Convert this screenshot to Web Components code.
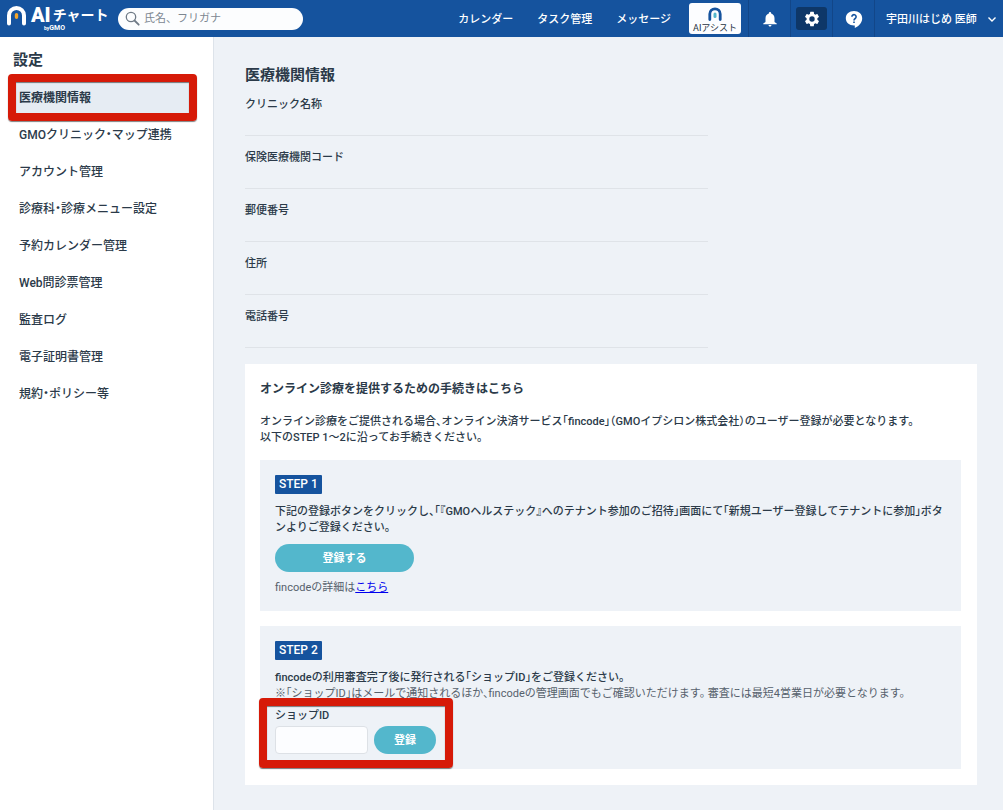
<!DOCTYPE html>
<html lang="ja">
<head>
<meta charset="UTF-8">
<meta name="viewport" content="width=device-width, initial-scale=1.0">
<title>設定 | AIチャート</title>
<style>
  body {
    margin: 0;
    font-family: Roboto, "Noto Sans CJK JP", sans-serif;
    font-size: 11px;
    line-height: 16px;
    font-weight: 500;
    font-feature-settings: "halt";
    color: #2b3a49;
    background: #eef2f7;
    --navy: #15539e;
    --teal: #53b7cc;
    --panel: #eef2f7;
    --mark: #d61a08;
  }
</style>
</head>
<body>
<chart-app>
  <app-header slot="header" user="宇田川はじめ 医師"></app-header>
  <side-menu slot="side" heading="設定">
    <callout-frame><menu-item active>医療機関情報</menu-item></callout-frame>
    <menu-item>GMOクリニック・マップ連携</menu-item>
    <menu-item>アカウント管理</menu-item>
    <menu-item>診療科・診療メニュー設定</menu-item>
    <menu-item>予約カレンダー管理</menu-item>
    <menu-item>Web問診票管理</menu-item>
    <menu-item>監査ログ</menu-item>
    <menu-item>電子証明書管理</menu-item>
    <menu-item>規約・ポリシー等</menu-item>
  </side-menu>
  <clinic-info></clinic-info>
</chart-app>

<script>
class BaseElement extends HTMLElement {
  constructor() {
    super();
    this.attachShadow({ mode: 'open' });
  }

  connectedCallback() {
    this.shadowRoot.innerHTML = this.render();
  }
}

class ChartApp extends BaseElement {
  render() {
    return `
      <style>
        :host { display: flex; flex-direction: column; min-height: 100vh; }
        .body { display: flex; flex: 1; }
        main { flex: 1; min-width: 0; padding: 30px 26px 24px 31px; }
      </style>
      <slot name="header"></slot>
      <div class="body">
        <slot name="side"></slot>
        <main><slot></slot></main>
      </div>
    `;
  }
}

class BrandLogo extends BaseElement {
  render() {
    return `
      <style>
        :host { display: flex; align-items: flex-start; gap: 4px; color: #fff; }
        .mark { display: block; width: 20px; height: 20px; }
        .name { display: flex; flex-direction: column; }
        .title { display: flex; align-items: center; gap: 2px; height: 18px; font-size: 14px; font-weight: 700; white-space: nowrap; }
        .title b { font-size: 20px; }
        .by { padding-left: 13px; font-size: 7px; line-height: 8px; font-weight: 700; }
        .by small { font-size: 5px; }
      </style>
      <svg class="mark" viewBox="0 0 20 20" aria-hidden="true">
        <path d="M2 17.500V9.500a7.500 7.500 0 0 1 15 0V17.500" fill="none" stroke="#fff" stroke-width="4" stroke-linecap="round"/>
        <path d="M9.500 7a1.700 1.700 0 0 1 1.700 1.700v2.600a1.700 1.700 0 0 1-3.400 0V8.700A1.700 1.700 0 0 1 9.500 7z" fill="#f4a52a"/>
      </svg>
      <div class="name">
        <span class="title"><b>AI</b>チャート</span>
        <span class="by"><small>by</small>GMO</span>
      </div>
    `;
  }
}

class SearchBox extends BaseElement {
  render() {
    return `
      <style>
        :host { display: block; }
        label {
          display: flex;
          align-items: center;
          gap: 4px;
          box-sizing: border-box;
          width: 185px;
          height: 22px;
          padding: 0 8px 0 7px;
          border-radius: 11px;
          background: #fcfdfe;
        }
        svg { flex: none; width: 15px; height: 15px; }
        input {
          flex: 1;
          min-width: 0;
          padding: 1px 0 0;
          border: 0;
          outline: 0;
          background: none;
          font: inherit;
          font-feature-settings: normal;
          color: #2b3a49;
        }
        input::placeholder { color: #7d8791; opacity: 1; }
      </style>
      <label>
        <svg viewBox="0 0 15 15" fill="none" stroke="#6f7a86" aria-hidden="true">
          <circle cx="6" cy="6" r="4.700" stroke-width="1.300"/>
          <path d="M9.500 9.500l4.200 4.200" stroke-width="1.800" stroke-linecap="round"/>
        </svg>
        <input type="search" placeholder="氏名、フリガナ" aria-label="患者検索">
      </label>
    `;
  }
}

class AppHeader extends BaseElement {
  render() {
    return `
      <style>
        :host {
          display: flex;
          align-items: center;
          height: 37px;
          background: var(--navy);
          color: #fff;
        }
        brand-logo { width: 104px; margin: 6px 0 0 7px; align-self: flex-start; }
        search-box { margin-left: 7px; font-weight: 400; }
        nav { display: flex; gap: 24px; margin-left: auto; margin-right: 18px; padding-top: 2px; white-space: nowrap; }
        nav a { color: inherit; text-decoration: none; }
        button { padding: 0; border: 0; background: none; color: inherit; font: inherit; cursor: pointer; }
        .assist {
          display: flex;
          flex-direction: column;
          align-items: center;
          width: 52px;
          height: 31px;
          margin-right: 7px;
          padding-top: 4px;
          box-sizing: border-box;
          border-radius: 3px;
          background: #fcfdff;
          color: #26333f;
          font-size: 9px;
          line-height: 15px;
          font-weight: 400;
          white-space: nowrap;
        }
        .assist svg { flex: none; width: 14px; height: 14px; }
        .tool {
          display: flex;
          align-items: center;
          justify-content: center;
          box-sizing: border-box;
          width: 42px;
          height: 37px;
          border-left: 1px solid #124688;
        }
        .tool span { display: flex; align-items: center; justify-content: center; width: 31px; height: 23px; border-radius: 3px; }
        .tool.on span { background: #0e3768; }
        .tool svg { width: 18px; height: 18px; }
        .user {
          display: flex;
          align-items: center;
          justify-content: space-between;
          box-sizing: border-box;
          width: 129px;
          height: 37px;
          padding: 2px 6px 0 11px;
          border-left: 1px solid #124688;
          white-space: nowrap;
        }
        .user svg { width: 10px; height: 10px; }
      </style>
      <brand-logo></brand-logo>
      <search-box></search-box>
      <nav>
        <a href="#calendar">カレンダー</a>
        <a href="#tasks">タスク管理</a>
        <a href="#messages">メッセージ</a>
      </nav>
      <button class="assist">
        <svg viewBox="0 0 14 14" aria-hidden="true">
          <path d="M1.800 12.500V7a5.200 5.200 0 0 1 10.400 0v5.500" fill="none" stroke="#15539e" stroke-width="2.800" stroke-linecap="round"/>
          <path d="M7 5.500a1.500 1.500 0 0 1 1.500 1.500v2.500a1.500 1.500 0 0 1-3 0V7A1.500 1.500 0 0 1 7 5.500z" fill="#53b7cc"/>
        </svg>
        AIアシスト
      </button>
      <button class="tool" aria-label="お知らせ"><span>
        <svg viewBox="0 0 24 24" fill="#fff"><path d="M12 22c1.100 0 2-.9 2-2h-4c0 1.100.9 2 2 2zm6-6v-5c0-3.070-1.640-5.640-4.500-6.320V4a1.500 1.500 0 0 0-3 0v.68C7.630 5.360 6 7.920 6 11v5l-3 2v1h18v-1l-3-2z"/></svg>
      </span></button>
      <button class="tool on" aria-label="設定"><span>
        <svg viewBox="0 0 24 24" fill="#fff"><path d="M19.140 12.940c.04-.3.060-.61.060-.94s-.02-.64-.07-.94l2.030-1.580a.49.49 0 0 0 .12-.61l-1.920-3.320a.49.49 0 0 0-.59-.22l-2.390.96a7 7 0 0 0-1.620-.94l-.36-2.540a.48.48 0 0 0-.48-.41h-3.840a.48.48 0 0 0-.47.41l-.36 2.540c-.59.24-1.130.57-1.620.94l-2.390-.96a.48.48 0 0 0-.59.220L2.740 8.870a.48.48 0 0 0 .12.610l2.030 1.580c-.05.3-.09.63-.09.94s.02.64.07.94l-2.030 1.580a.49.49 0 0 0-.12.610l1.920 3.320c.12.220.37.290.59.220l2.390-.96c.5.380 1.030.7 1.620.94l.36 2.540c.05.240.24.410.48.410h3.840c.24 0 .44-.17.470-.41l.36-2.540a6.800 6.800 0 0 0 1.620-.94l2.390.96c.22.080.47 0 .59-.22l1.920-3.320a.48.48 0 0 0-.12-.61l-2.010-1.580zM12 15.600a3.600 3.600 0 1 1 0-7.200 3.600 3.600 0 0 1 0 7.200z"/></svg>
      </span></button>
      <button class="tool" aria-label="ヘルプ"><span>
        <svg viewBox="0 0 18 18"><path d="M9 1C4.300 1 .8 4 .8 8.300s3.500 7.200 8.200 7.200h.8V18c3.700-1.600 7.400-5 7.400-9.700C17.200 4 13.700 1 9 1z" fill="#fff"/><path d="M6.900 6.800a2.100 2.100 0 1 1 3.300 1.700c-.9.6-1.200.9-1.200 1.900M9 11.500v1.600" fill="none" stroke="#15539e" stroke-width="1.600"/></svg>
      </span></button>
      <button class="user">
        ${this.getAttribute('user')}
        <svg viewBox="0 0 10 10" fill="none" stroke="#fff" stroke-width="1.400" aria-hidden="true"><path d="M1.500 2.500L5 6l3.500-3.500"/></svg>
      </button>
    `;
  }
}

// Thick red frame drawn around whatever is slotted in
class CalloutFrame extends BaseElement {
  render() {
    return `
      <style>
        :host {
          display: block;
          position: relative;
          --frame-inset: -5px 16px -5px 8px;
        }
        :host([wide]) {
          width: max-content;
          --frame-inset: -10px -17px -14px -16px;
        }
        :host::after {
          content: "";
          position: absolute;
          inset: var(--frame-inset);
          border: 8px solid var(--mark);
          border-radius: 4px;
          box-shadow: 0 1px 1px rgba(0, 0, 0, .5), inset 0 1px 1px rgba(0, 0, 0, .5);
          pointer-events: none;
        }
      </style>
      <slot></slot>
    `;
  }
}

class SideMenu extends BaseElement {
  render() {
    return `
      <style>
        :host {
          display: block;
          flex: none;
          box-sizing: border-box;
          width: 214px;
          padding-top: 8px;
          border-right: 1px solid #dde3ea;
          background: #fff;
        }
        h2 { margin: 0 0 4px; padding-left: 13px; font-size: 15px; line-height: 30px; font-weight: 700; }
      </style>
      <h2>${this.getAttribute('heading')}</h2>
      <nav><slot></slot></nav>
    `;
  }
}

class MenuItem extends BaseElement {
  render() {
    return `
      <style>
        :host { display: block; font-size: 12px; }
        a {
          display: block;
          margin: 0 16px 0 8px;
          padding: 2px 0 0 11px;
          line-height: 35px;
          color: inherit;
          text-decoration: none;
        }
        :host([active]) a { background: #e6ecf3; font-weight: 700; }
      </style>
      <a href="#"><slot></slot></a>
    `;
  }
}

class InfoField extends BaseElement {
  render() {
    return `
      <style>
        :host {
          display: block;
          box-sizing: border-box;
          max-width: 463px;
          height: 53px;
          padding-top: 14px;
          border-bottom: 1px solid #dfe3e8;
        }
      </style>
      <slot></slot>
    `;
  }
}

class PillButton extends BaseElement {
  render() {
    return `
      <style>
        :host { display: block; }
        button {
          display: block;
          width: 62px;
          height: 28px;
          padding: 2px 0 0;
          border: 0;
          border-radius: 14px;
          background: var(--teal);
          color: #fff;
          font: inherit;
          font-weight: 700;
          cursor: pointer;
        }
        :host([wide]) button { width: 139px; }
      </style>
      <button type="button"><slot></slot></button>
    `;
  }
}

class StepPanel extends BaseElement {
  render() {
    return `
      <style>
        :host {
          display: block;
          padding: 15px 8px 15px 15px;
          background: var(--panel);
        }
        h4 {
          width: max-content;
          margin: 0 0 10px;
          padding: 0 4px;
          border-radius: 1px;
          background: var(--navy);
          color: #fff;
          font-size: 12px;
          line-height: 19px;
          font-weight: 500;
        }
      </style>
      <h4>${this.getAttribute('label')}</h4>
      <slot></slot>
    `;
  }
}

class ShopForm extends BaseElement {
  render() {
    return `
      <style>
        :host { display: block; }
        label { display: block; margin-bottom: 2px; }
        .row { display: flex; gap: 6px; }
        input {
          box-sizing: border-box;
          width: 93px;
          height: 28px;
          padding: 0 8px;
          border: 1px solid #dde1e6;
          border-radius: 4px;
          background: #fcfdff;
          font: inherit;
        }
      </style>
      <label for="shop-id">ショップID</label>
      <div class="row">
        <input id="shop-id" type="text">
        <pill-button>登録</pill-button>
      </div>
    `;
  }
}

class ClinicInfo extends BaseElement {
  render() {
    const fields = ['クリニック名称', '保険医療機関コード', '郵便番号', '住所', '電話番号'];
    return `
      <style>
        :host { display: block; }
        h1 { margin: 0; font-size: 15px; line-height: 16px; font-weight: 700; }
        .card { margin-top: 16px; padding: 17px 16px 16px 15px; background: #fff; }
        h3 { margin: 0 0 17px; font-size: 12px; line-height: 16px; font-weight: 700; }
        p { margin: 0; }
        .steps { display: grid; gap: 15px; margin-top: 14px; }
        .note { color: #56616c; font-weight: 400; }
        pill-button { margin: 8px 0; }
        callout-frame { margin-top: 6px; }
        a { color: #0000ee; }
      </style>
      <h1>医療機関情報</h1>
      ${fields.map(name => `<info-field>${name}</info-field>`).join('')}
      <section class="card">
        <h3>オンライン診療を提供するための手続きはこちら</h3>
        <p>オンライン診療をご提供される場合、オンライン決済サービス「fincode」（GMOイプシロン株式会社）のユーザー登録が必要となります。<br>以下のSTEP 1〜2に沿ってお手続きください。</p>
        <div class="steps">
          <step-panel label="STEP 1">
            <p>下記の登録ボタンをクリックし、「『GMOヘルステック』へのテナント参加のご招待」画面にて「新規ユーザー登録してテナントに参加」ボタンよりご登録ください。</p>
            <pill-button wide>登録する</pill-button>
            <p class="note">fincodeの詳細は<a href="#fincode">こちら</a></p>
          </step-panel>
          <step-panel label="STEP 2">
            <p>fincodeの利用審査完了後に発行される「ショップID」をご登録ください。</p>
            <p class="note">※「ショップID」はメールで通知されるほか、fincodeの管理画面でもご確認いただけます。 審査には最短4営業日が必要となります。</p>
            <callout-frame wide><shop-form></shop-form></callout-frame>
          </step-panel>
        </div>
      </section>
    `;
  }
}

customElements.define('chart-app', ChartApp);
customElements.define('brand-logo', BrandLogo);
customElements.define('search-box', SearchBox);
customElements.define('app-header', AppHeader);
customElements.define('callout-frame', CalloutFrame);
customElements.define('side-menu', SideMenu);
customElements.define('menu-item', MenuItem);
customElements.define('info-field', InfoField);
customElements.define('pill-button', PillButton);
customElements.define('step-panel', StepPanel);
customElements.define('shop-form', ShopForm);
customElements.define('clinic-info', ClinicInfo);
</script>
</body>
</html>
